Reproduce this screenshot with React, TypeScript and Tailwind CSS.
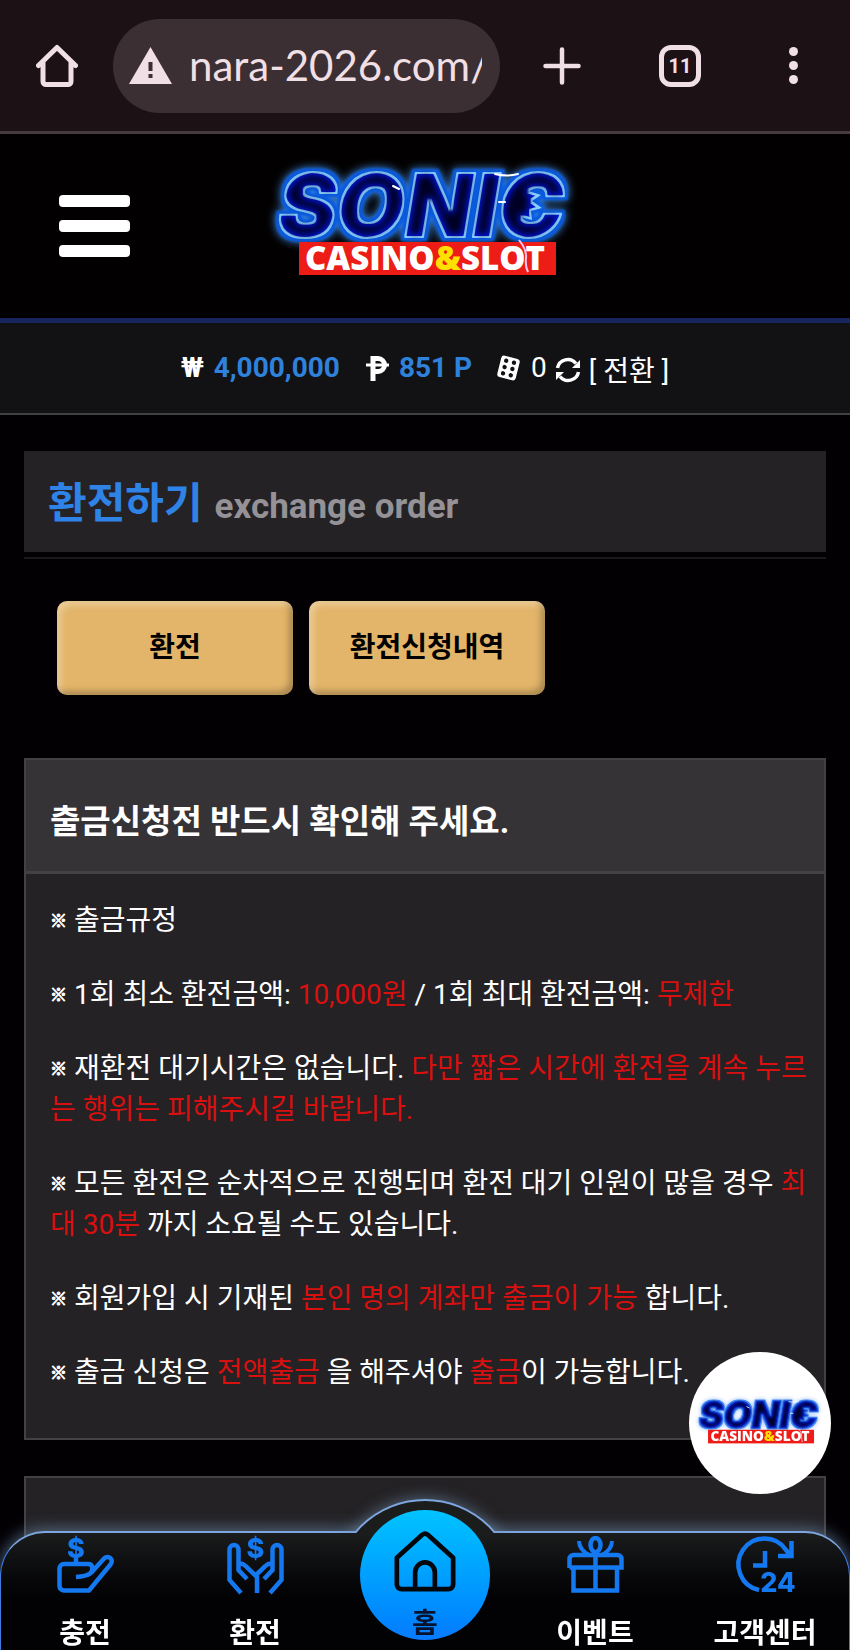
import type { ReactNode } from "react";

const sans = "font-['Roboto','Noto_Sans_CJK_KR',sans-serif]";

function Logo({ id, light, className }: { id: string; light?: boolean; className?: string }) {
  const glow = light ? "#8fb8ff" : "#3f8fe8";
  const halo = light ? "#3f86f5" : "#0b5be0";
  const edge = light ? "#1646c8" : "#8ad0ff";

  return (
    <svg viewBox="0 -16 320 156" className={className} role="img" aria-label="Sonic Casino & Slot">
      <defs>
        {/* Outer glow, solid halo, then a blue shade that fades towards the letter centres */}
        <filter id={`${id}-neon`} x="-10%" y="-20%" width="120%" height="140%" colorInterpolationFilters="sRGB">
          <feMorphology in="SourceAlpha" operator="dilate" radius="3" result="wide" />
          <feGaussianBlur in="wide" stdDeviation="5" result="soft" />
          <feFlood floodColor={glow} />
          <feComposite in2="soft" operator="in" result="glow" />
          <feGaussianBlur in="wide" stdDeviation="1" result="haloShape" />
          <feFlood floodColor={halo} />
          <feComposite in2="haloShape" operator="in" result="halo" />
          <feFlood floodColor={edge} />
          <feComposite in2="SourceAlpha" operator="in" result="edge" />
          <feMorphology in="SourceAlpha" operator="erode" radius="1.5" result="body" />
          <feFlood floodColor="#0014d8" />
          <feComposite in2="body" operator="in" result="blue" />
          <feMorphology in="SourceAlpha" operator="erode" radius="4" result="coreShape" />
          <feGaussianBlur in="coreShape" stdDeviation="3" result="coreSoft" />
          <feFlood floodColor="#000024" />
          <feComposite in2="coreSoft" operator="in" result="core" />
          <feMerge>
            <feMergeNode in="glow" />
            <feMergeNode in="halo" />
            <feMergeNode in="edge" />
            <feMergeNode in="blue" />
            <feMergeNode in="core" />
          </feMerge>
        </filter>
      </defs>

      <g filter={`url(#${id}-neon)`}>
        <text
          x="13"
          y="73"
          fontFamily="Inter, sans-serif"
          fontSize="88"
          fontWeight="900"
          fontStyle="italic"
          stroke="#000"
          strokeWidth="2"
          strokeLinejoin="round"
        >
          SONIC
        </text>
        {/* Quills in the mouth of the last letter */}
        <path d="M260 26L276 31L267 37L277 44L266 47L267 56L252 52z" />
      </g>
      <path d="M128 22l6 3M230 10q12 3 23 0M234 38h6" stroke="#fff" strokeWidth="2" strokeLinecap="round" fill="none" />

      {/* Red banner */}
      <rect x="34" y="78" width="257" height="33" fill="#ee1c16" />
      <text
        x="160"
        y="106"
        textAnchor="middle"
        fill="#fff"
        fontFamily="'Open Sans', sans-serif"
        fontSize="33"
        fontWeight="800"
      >
        CASINO<tspan fill="#ffe000">&amp;</tspan>SLOT
      </text>
      <path d="M254 76q8 10 7 18t2 14" fill="none" stroke="#ffc8f4" strokeWidth="2" />
    </svg>
  );
}

function BrowserBar() {
  return (
    <div className="flex h-[134px] items-center border-b-[3px] border-[#463c40] bg-[#1c1114] pl-9 text-[#f0dfe4]">
      <button aria-label="Home page" className="shrink-0">
        <svg width="42" height="43" viewBox="0 0 42 43" fill="none" stroke="currentColor" strokeWidth="5" strokeLinejoin="round" strokeLinecap="round">
          <path d="M2.500 21.500L21 3.500L39.500 21.500M7 18V37.500a3 3 0 0 0 3 3H32a3 3 0 0 0 3-3V18" />
        </svg>
      </button>
      <div className="ml-[35px] flex h-[94px] min-w-0 flex-1 items-center rounded-full bg-[#3c2f33] pl-4 pr-[18px]">
        <svg width="43" height="37" viewBox="0 0 43 37" className="shrink-0">
          <path d="M21.500 0L43 37H0z" fill="currentColor" />
          <path d="M19.500 15h4v9h-4zM19.500 27h4v4h-4z" fill="#3c2f33" />
        </svg>
        <input
          aria-label="Address"
          defaultValue="nara-2026.com/"
          className="ml-[17px] w-full min-w-0 bg-transparent font-['Lato',sans-serif] text-[42px] outline-none"
        />
      </div>
      <div className="flex items-center pl-[43px] pr-[52px]">
        <button aria-label="New tab">
          <svg width="38" height="38" viewBox="0 0 38 38" stroke="currentColor" strokeWidth="4.500" strokeLinecap="round">
            <path d="M19 2.500V35.500M2.500 19H35.500" />
          </svg>
        </button>
        <button
          aria-label="Tabs"
          className="ml-[78px] flex size-[42px] items-center justify-center rounded-xl border-[5px] border-current font-['Roboto',sans-serif] text-xl font-bold leading-none"
        >
          11
        </button>
        <button aria-label="Menu" className="ml-[88px] flex flex-col gap-[5px]">
          <span className="size-[9px] rounded-full bg-current" />
          <span className="size-[9px] rounded-full bg-current" />
          <span className="size-[9px] rounded-full bg-current" />
        </button>
      </div>
    </div>
  );
}

function SiteHeader() {
  return (
    <header className="grid h-[189px] grid-cols-[1fr_auto_1fr] items-center border-b-[5px] border-[#17255c] bg-[#030001]">
      <button aria-label="Open menu" className="ml-[59px] flex w-[71px] flex-col gap-[13px]">
        <span className="h-3 rounded-sm bg-white" />
        <span className="h-3 rounded-sm bg-white" />
        <span className="h-3 rounded-sm bg-white" />
      </button>
      <Logo id="head" className="w-[320px]" />
    </header>
  );
}

function BalanceBar() {
  return (
    <div className="flex h-[92px] items-center justify-center border-b-2 border-[#414043] bg-[#121215] text-[28px] text-white">
      <span className="font-bold">₩</span>
      <span className="ml-[10px] font-bold text-[#2f82dc]">4,000,000</span>
      <svg width="23" height="25" viewBox="0 0 23 25" fill="none" stroke="currentColor" className="ml-[26px]">
        <path d="M7 25V2.500H12a5.500 5.500 0 0 1 0 13H7" strokeWidth="5" />
        <path d="M0 9H23" strokeWidth="3" />
      </svg>
      <span className="ml-[10px] font-bold text-[#2f82dc]">851 P</span>
      <svg width="25" height="26" viewBox="0 0 25 26" className="ml-6">
        <g transform="rotate(14 12.500 13)">
          <rect x="3" y="2" width="19" height="22" rx="3" fill="#fff" />
          <g fill="#121215">
            <circle cx="8.500" cy="6.500" r="2.200" />
            <circle cx="16.500" cy="6.500" r="2.200" />
            <circle cx="8.500" cy="13" r="2.200" />
            <circle cx="16.500" cy="13" r="2.200" />
            <circle cx="8.500" cy="19.500" r="2.200" />
            <circle cx="16.500" cy="19.500" r="2.200" />
          </g>
        </g>
      </svg>
      <span className="ml-[10px]">0</span>
      <button className="ml-2 flex items-center gap-2 pt-1">
        <svg width="26" height="26" viewBox="0 0 26 26" fill="none" stroke="currentColor" strokeWidth="3.500">
          <path d="M2.500 11A10.500 10.500 0 0 1 21 6.500M23.500 15A10.500 10.500 0 0 1 5 19.500" />
          <path d="M25 3V11H17zM1 23V15H9z" fill="currentColor" stroke="none" />
        </svg>
        <span className="pt-1">[ 전환 ]</span>
      </button>
    </div>
  );
}

function Red({ children }: { children: ReactNode }) {
  return <span className="text-[#d8100f]">{children}</span>;
}

const rules: ReactNode[] = [
  <>출금규정</>,
  <>1회 최소 환전금액: <Red>10,000원</Red> / 1회 최대 환전금액: <Red>무제한</Red></>,
  <>재환전 대기시간은 없습니다. <Red>다만 짧은 시간에 환전을 계속 누르는 행위는 피해주시길 바랍니다.</Red></>,
  <>모든 환전은 순차적으로 진행되며 환전 대기 인원이 많을 경우 <Red>최대 30분</Red> 까지 소요될 수도 있습니다.</>,
  <>회원가입 시 기재된 <Red>본인 명의 계좌만 출금이 가능</Red> 합니다.</>,
  <>출금 신청은 <Red>전액출금</Red> 을 해주셔야 <Red>출금</Red>이 가능합니다.</>,
];

function Notice() {
  return (
    <section className="mt-[63px] border-2 border-[#434145] bg-[#242225] text-white">
      <h2 className="border-b-[3px] border-[#434145] bg-[#353336] pb-[25px] pl-6 pt-[37px] text-[33px] font-bold leading-[49px]">
        출금신청전 반드시 확인해 주세요.
      </h2>
      <div className="space-y-[33px] pb-[45px] pl-6 pr-2 pt-[26px] text-[28px] leading-[41px]">
        {rules.map((rule, i) => (
          <p key={i}>
            <span className="align-[3px] text-[17px] leading-none [-webkit-text-stroke:1px_white]">※</span> {rule}
          </p>
        ))}
      </div>
    </section>
  );
}

const iconProps = {
  width: 57,
  height: 57,
  viewBox: "0 0 57 57",
  fill: "none",
  stroke: "#1478f0",
  strokeWidth: 4.5,
};

function Dollar({ x }: { x: number }) {
  return (
    <text x={x} y="22" textAnchor="middle" fontFamily="Inter, sans-serif" fontSize="27" fontWeight="800" fill="#1478f0" stroke="none">
      $
    </text>
  );
}

function DepositIcon() {
  return (
    <svg {...iconProps} className="overflow-visible">
      <Dollar x={19} />
      <path d="M19 22V28" />
      <path d="M19 41c7-.5 11-1 14-3.500c4-3.500 3-9.500-2-9.500H7a4.500 4.500 0 0 0-4.500 4.500V50a4.500 4.500 0 0 0 4.500 4.500H32L53.500 28.500c4-5-2-10-6.500-6L34 37" />
    </svg>
  );
}

function WithdrawIcon() {
  return (
    <svg {...iconProps} className="overflow-visible">
      <Dollar x={28.5} />
      <path d="M14 57L2.500 44V13.500a4.500 4.500 0 0 1 9 0V34L20 43M11.500 28c3-1.500 5 0 7 2L30 41V57" />
      <path d="M43 57L54.500 44V13.500a4.500 4.500 0 0 0-9 0V34L37 43M45.500 28c-3-1.500-5 0-7 2L28 40" />
    </svg>
  );
}

function GiftIcon() {
  return (
    <svg {...iconProps}>
      <path d="M6.500 32V54.500H50V32M28.500 18V54M2.500 32V23a4 4 0 0 1 4-4H50.500a4 4 0 0 1 4 4V31.500H2.500" />
      <ellipse cx="28.500" cy="9" rx="5" ry="7" />
      <path d="M12 5c0 6 3 10 10 14M45 5c0 6-3 10-10 14" strokeWidth="4" />
    </svg>
  );
}

function SupportIcon() {
  return (
    <svg {...iconProps} className="overflow-visible">
      <path d="M22 54A26 26 0 1 1 49 14L54 20M54.500 5V20H41M28 15V29.500H16" />
      <text x="41" y="56" textAnchor="middle" fontFamily="Inter, sans-serif" fontSize="27" fontWeight="800" fill="#1478f0" stroke="none">
        24
      </text>
    </svg>
  );
}

function NavItem({ icon, label }: { icon: ReactNode; label: string }) {
  return (
    <a href="#" className="flex flex-col items-center gap-[25px] pt-[5px]">
      {icon}
      <span className="text-[28px] leading-8 whitespace-nowrap">{label}</span>
    </a>
  );
}

function BottomNav() {
  return (
    <nav className="fixed inset-x-0 bottom-0 h-[119px] font-bold text-white">
      <div className="absolute inset-0 rounded-t-[45px] border border-b-0 border-[#3f7be0] border-t-2 border-t-[#7ea6e0] bg-linear-to-b from-[#1b1c1c] to-[#020204] to-60% shadow-[0_-2px_14px_2px_#7395b880]" />
      {/* Raised arc behind the home button */}
      <div className="absolute -top-[32px] left-1/2 size-[184px] -translate-x-1/2 rounded-full border-2 border-[#7ea6e0] bg-[#1b1c1c] shadow-[0_0_14px_2px_#7395b880] [clip-path:inset(-20px_0_150px_0)]" />
      <div className="relative grid grid-cols-5">
        <NavItem icon={<DepositIcon />} label="충전" />
        <NavItem icon={<WithdrawIcon />} label="환전" />
        <div className="relative">
          <a
            href="#"
            className="absolute -top-[21px] left-1/2 flex size-[130px] -translate-x-1/2 flex-col items-center rounded-full bg-linear-to-b from-[#00c3ff] to-[#0a7aff] pt-[21px] text-[#08122c]"
          >
            <svg width="66" height="65" viewBox="0 0 66 65" fill="none" stroke="#03070c" strokeWidth="5" strokeLinejoin="round">
              <path d="M3 28.500L30 4q3-2.500 6 0L63 28.500V57a5 5 0 0 1-5 5H8a5 5 0 0 1-5-5zM22.500 62V44a10.500 10.500 0 0 1 21 0V62" />
            </svg>
            <span className="mt-4 text-[28px] leading-8">홈</span>
          </a>
        </div>
        <NavItem icon={<GiftIcon />} label="이벤트" />
        <NavItem icon={<SupportIcon />} label="고객센터" />
      </div>
    </nav>
  );
}

export default function App() {
  return (
    <div className={`flex min-h-screen flex-col bg-[#030004] ${sans}`}>
      <BrowserBar />
      <SiteHeader />
      <BalanceBar />

      <main className="flex flex-1 flex-col px-6 pt-9">
        {/* Page title */}
        <div className="border-b-2 border-[#1a181b] pb-[5px]">
          <h1 className="flex h-[101px] items-baseline gap-3 bg-[#242225] pl-6 pt-[23px] font-bold">
            <span className="text-[42px] leading-[60px] text-[#2f82e6]">환전하기</span>
            <span className="text-[35px] text-[#949296]">exchange order</span>
          </h1>
        </div>

        <div className="mt-[42px] flex gap-4 pl-[33px]">
          {["환전", "환전신청내역"].map((label) => (
            <button
              key={label}
              className="h-[94px] w-[236px] rounded-[10px] bg-[#e3b56a] text-[28px] font-bold text-black shadow-[inset_4px_4px_6px_#ffffff50,inset_-4px_-4px_6px_#00000040]"
            >
              {label}
            </button>
          ))}
        </div>

        <Notice />
        <section className="mt-9 min-h-[175px] flex-1 border-2 border-b-0 border-[#434145] bg-[#242225]" />
      </main>

      <button aria-label="Sonic" className="fixed bottom-[156px] right-[19px] flex size-[142px] items-center justify-center rounded-full bg-white">
        <Logo id="float" light className="w-[132px]" />
      </button>
      <BottomNav />
    </div>
  );
}
